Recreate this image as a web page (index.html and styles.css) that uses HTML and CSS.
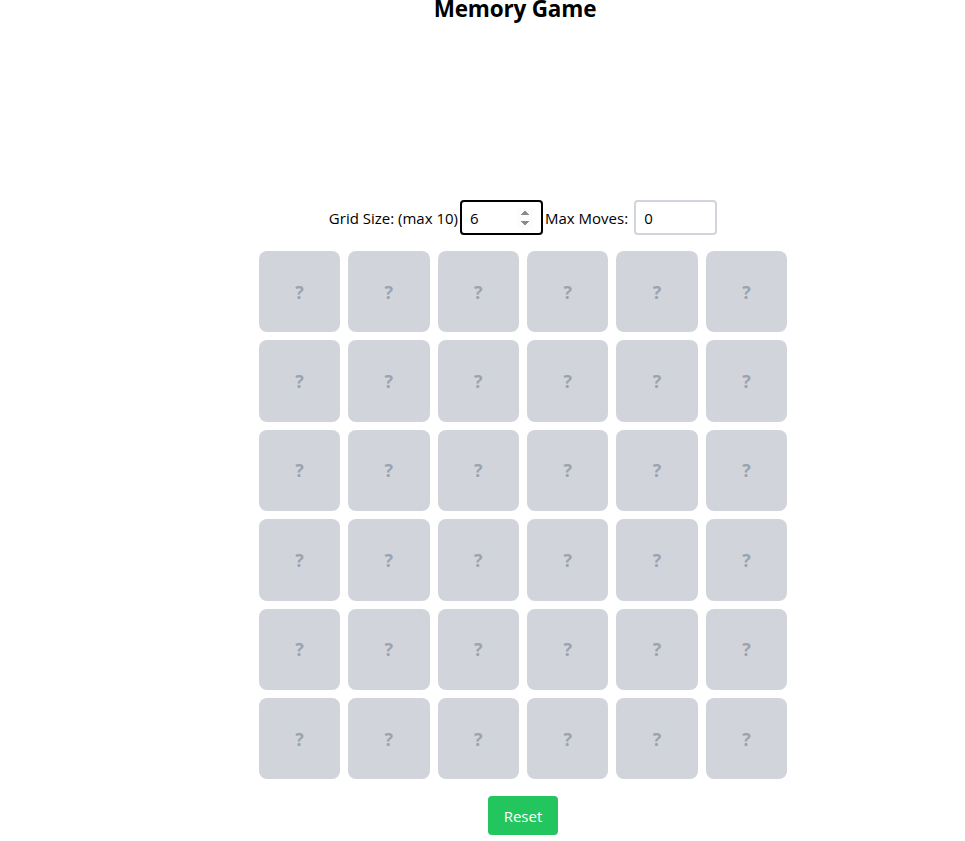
FILE: index.html
```html
<!DOCTYPE html>
<html>
<head>
<meta charset="utf-8">
<link rel="stylesheet" href="styles.css">
</head>
<body>
<div class="app">
  <h1 class="title">Memory Game</h1>
  <div class="controls">
    <label class="label">Grid Size: (max 10)</label>
    <input class="field field-focus" type="number" value="6" autofocus>
    <label class="label">Max Moves:</label>
    <input class="field" type="text" value="0">
  </div>
  <div class="grid">
    <div class="card">?</div><div class="card">?</div><div class="card">?</div><div class="card">?</div><div class="card">?</div><div class="card">?</div>
    <div class="card">?</div><div class="card">?</div><div class="card">?</div><div class="card">?</div><div class="card">?</div><div class="card">?</div>
    <div class="card">?</div><div class="card">?</div><div class="card">?</div><div class="card">?</div><div class="card">?</div><div class="card">?</div>
    <div class="card">?</div><div class="card">?</div><div class="card">?</div><div class="card">?</div><div class="card">?</div><div class="card">?</div>
    <div class="card">?</div><div class="card">?</div><div class="card">?</div><div class="card">?</div><div class="card">?</div><div class="card">?</div>
    <div class="card">?</div><div class="card">?</div><div class="card">?</div><div class="card">?</div><div class="card">?</div><div class="card">?</div>
  </div>
  <button class="reset">Reset</button>
</div>
</body>
</html>
```
FILE: styles.css
```css
html, body {
  margin: 0;
  padding: 0;
  background: #ffffff;
  overflow: hidden;
}
body {
  font-family: "Open Sans", "Noto Sans", sans-serif;
  color: #000;
}
.app {
  box-sizing: border-box;
  width: 100%;
  padding-left: 81px;
  display: flex;
  flex-direction: column;
  align-items: center;
}
.title {
  margin: -3px 16px 0 0;
  font-size: 22.5px;
  line-height: 24px;
  font-weight: 700;
  letter-spacing: -0.2px;
}
.controls {
  margin-top: 179px;
  display: flex;
  align-items: center;
  gap: 2px;
  font-size: 15px;
}
.field {
  box-sizing: border-box;
  width: 83px;
  height: 35px;
  border: 2px solid #d1d5db;
  border-radius: 4px;
  padding: 0 8px;
  font-family: inherit;
  font-size: 15px;
  color: #000;
  outline: none;
}
.field-focus {
  border-color: #000;
}
.controls .label:nth-of-type(2) {
  margin-right: 4px;
}
.grid {
  margin-top: 16px;
  display: grid;
  grid-template-columns: repeat(6, 81.4px);
  grid-auto-rows: 81.4px;
  gap: 8px;
}
.card {
  background: #d1d5db;
  border-radius: 8px;
  display: flex;
  align-items: center;
  justify-content: center;
  color: #9ca3af;
  font-weight: 700;
  font-size: 18px;
}
.reset {
  margin-top: 17px;
  width: 70px;
  height: 39px;
  border: none;
  border-radius: 4px;
  background: #22c55e;
  color: #fff;
  font-family: inherit;
  font-size: 15px;
  padding: 0;
}
```
